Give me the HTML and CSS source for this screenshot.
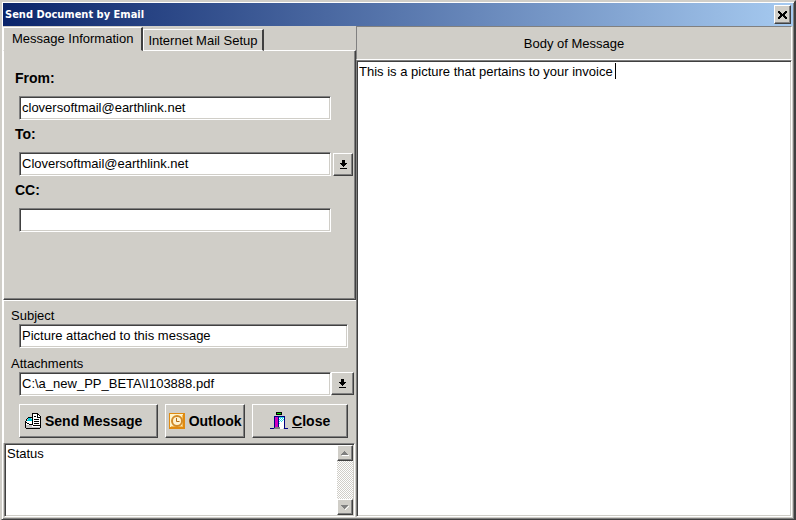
FILE: index.html
```
<!DOCTYPE html>
<html lang="en">
<head>
    <meta charset="utf-8">
    <title>Send Document by Email</title>
    <link rel="stylesheet" href="styles.css">
</head>
<body>
    <div class="window">
        <div class="titlebar">
            <span class="title">Send Document by Email</span>
            <button type="button" class="raised close-box" aria-label="Close window">
                <svg width="9" height="8" viewBox="0 0 9 8" shape-rendering="crispEdges"><path d="M0 0h2v1h-2zM7 0h2v1h-2zM0 1h3v1h-3zM6 1h3v1h-3zM1 2h3v1h-3zM5 2h3v1h-3zM2 3h5v2h-5zM1 5h3v1h-3zM5 5h3v1h-3zM0 6h3v1h-3zM6 6h3v1h-3zM0 7h2v1h-2zM7 7h2v1h-2z"/></svg>
            </button>
        </div>

        <form class="content">
            <div class="left">
                <div class="tabs" role="tablist">
                    <button type="button" class="tab active" role="tab" aria-selected="true">Message Information</button>
                    <button type="button" class="tab" role="tab" aria-selected="false">Internet Mail Setup</button>
                </div>

                <div class="tab-page">
                    <label class="heading" for="from">From:</label>
                    <div class="field">
                        <input type="text" class="sunken" id="from" value="cloversoftmail@earthlink.net">
                    </div>
                    <label class="heading" for="to">To:</label>
                    <div class="field">
                        <input type="text" class="sunken" id="to" value="Cloversoftmail@earthlink.net">
                        <button type="button" class="raised drop" aria-label="Choose recipient">
                            <svg width="7" height="9" viewBox="0 0 7 9" shape-rendering="crispEdges"><path d="M2 0h3v3h2v1h-1v1h-1v1h-1v1h-1v-1h-1v-1h-1v-1h-1v-1h2zM0 8h7v1h-7z"/></svg>
                        </button>
                    </div>
                    <label class="heading" for="cc">CC:</label>
                    <div class="field">
                        <input type="text" class="sunken" id="cc">
                    </div>
                </div>

                <div class="details">
                    <label for="subject">Subject</label>
                    <div class="field">
                        <input type="text" class="sunken" id="subject" value="Picture attached to this message">
                    </div>
                    <label for="attachments">Attachments</label>
                    <div class="field attach">
                        <input type="text" class="sunken" id="attachments" value="C:\a_new_PP_BETA\I103888.pdf">
                        <button type="button" class="raised drop" aria-label="Choose attachment">
                            <svg width="7" height="9" viewBox="0 0 7 9" shape-rendering="crispEdges"><path d="M2 0h3v3h2v1h-1v1h-1v1h-1v1h-1v-1h-1v-1h-1v-1h-1v-1h2zM0 8h7v1h-7z"/></svg>
                        </button>
                    </div>
                    <div class="actions">
                        <button type="submit" class="raised action send">
                            <svg width="16" height="16" viewBox="0 0 16 16" shape-rendering="crispEdges">
                                <path fill="#fff" d="M1 7h6v-6h6l2 3v11h-14z"/>
                                <path fill="#c4c4c4" d="M1 12h6v2h8v1h-14z"/>
                                <path fill="#00c8d8" d="M3 5h3v1h1v2h-5v-1h1z"/>
                                <!-- sheet -->
                                <path d="M7 0h6v1h-6zM7 1h1v11h-1zM13 1h1v1h-1zM14 2h1v1h-1zM15 3h1v10h-1zM12 1h1v3h3v1h-4zM8 12h8v1h-8z"/>
                                <path d="M9 3h2v1h-2zM9 6h5v1h-5zM9 8h5v1h-5zM9 10h5v1h-5z"/>
                                <!-- envelope -->
                                <path d="M3 4h4v1h-4zM2 5h1v1h-1zM1 6h1v2h-1zM0 8h1v7h-1zM1 9h1v1h-1zM2 10h2v1h-2zM4 11h3v1h-3zM1 15h14v1h-14zM15 13h1v2h-1z"/>
                            </svg>
                            <span>Send Message</span>
                        </button>
                        <button type="button" class="raised action outlook">
                            <svg width="16" height="16" viewBox="0 0 16 16">
                                <path fill="#e08a10" d="M0 0h16v16h-16z"/>
                                <path fill="#fff3c8" d="M1 1h13v13h-13z"/>
                                <path fill="#f6bd58" d="M13 2h1v12h-12v-1h11z"/>
                                <circle cx="8" cy="8" r="5" fill="#fff3d0" stroke="#d18a28" stroke-width="2"/>
                                <path fill="none" stroke="#b06a18" d="M7.500 5v3.500h3"/>
                            </svg>
                            <span>Outlook</span>
                        </button>
                        <button type="button" class="raised action close">
                            <svg width="18" height="18" viewBox="0 0 18 18" shape-rendering="crispEdges">
                                <path d="M6 0h6v3h-6z"/>
                                <path fill="#00d800" d="M7 1h4v1h-4z"/>
                                <path fill="#000080" d="M4 4h11v1h-11zM4 5h1v12h-1zM8 5h1v10h-1zM14 5h1v12h-1zM0 16h4v1h-4zM15 16h3v1h-3z"/>
                                <path fill="#d000c0" d="M5 5h3v10h-1v1h-2z"/>
                                <path fill="#fff" d="M9 5h5v11h-1v1h-3v-2h-1z"/>
                                <path fill="#30d8e8" d="M9 5h5v1h-5zM9 7h1v1h-1zM11 7h1v1h-1zM13 7h1v1h-1zM10 6h1v1h-1zM12 6h1v1h-1zM10 8h1v1h-1zM12 8h1v1h-1zM9 9h1v1h-1zM11 9h1v1h-1zM9 11h1v1h-1z"/>
                                <path fill="#808080" d="M5 15h5v2h-6v-1h1z"/>
                            </svg>
                            <span><u>C</u>lose</span>
                        </button>
                    </div>
                </div>

                <div class="sunken status">
                    <textarea aria-label="Status" readonly>Status</textarea>
                    <div class="scrollbar">
                        <button type="button" class="raised" aria-label="Scroll up">
                            <svg width="8" height="5" viewBox="0 0 8 5" shape-rendering="crispEdges"><path fill="#fff" d="M1 4h7v1h-7z"/><path fill="#808080" d="M3 0h1v1h1v1h1v1h1v1h-7v-1h1v-1h1v-1h1z"/></svg>
                        </button>
                        <button type="button" class="raised" aria-label="Scroll down">
                            <svg width="8" height="5" viewBox="0 0 8 5" shape-rendering="crispEdges"><path fill="#fff" d="M7 1h1v1h-1v1h-1v1h-1v1h-1v-1z"/><path fill="#808080" d="M0 0h7v1h-1v1h-1v1h-1v1h-1v-1h-1v-1h-1v-1h-1z"/></svg>
                        </button>
                    </div>
                </div>
            </div>

            <div class="right">
                <label class="body-label" for="body">Body of Message</label>
                <div class="sunken body-box">
                    <textarea id="body">This is a picture that pertains to your invoice</textarea>
                    <span class="caret"></span>
                </div>
            </div>
        </form>
    </div>
</body>
</html>
```
FILE: styles.css
```
* {
    box-sizing: border-box;
}

body {
    margin: 0;
    font: 13px/16px "Liberation Sans", Arial, sans-serif;
    color: #000;
}

input, textarea, button {
    margin: 0;
    padding: 0;
    font: inherit;
    color: inherit;
    border: 0;
    border-radius: 0;
    outline: 0;
}

svg {
    display: block;
    flex: none;
}

.window {
    display: flex;
    flex-direction: column;
    min-height: 100vh;
    padding: 1px;
    background: #d0cec8;
    border: 2px solid;
    border-color: #d0cec8 #404040 #404040 #d0cec8;
    box-shadow: inset 1px 1px #fff, inset -1px -1px #808080;
}

.raised {
    display: flex;
    align-items: center;
    justify-content: center;
    background: #d0cec8;
    border: 1px solid;
    border-color: #fff #404040 #404040 #fff;
    box-shadow: inset -1px -1px #808080;
}

.sunken {
    background: #fff;
    border: 1px solid;
    border-color: #808080 #fff #fff #808080;
    box-shadow: inset 1px 1px #404040, inset -1px -1px #d0cec8;
}

.titlebar {
    display: flex;
    align-items: center;
    justify-content: space-between;
    height: 23px;
    padding: 0 2px;
    background: linear-gradient(to right, #0a246a, #a6caf0);
}

.title {
    font: bold 11px/16px "DejaVu Sans Condensed", sans-serif;
    color: #fff;
}

.close-box {
    width: 17px;
    height: 19px;
}

.content {
    flex: 1;
    display: grid;
    grid-template-columns: 353fr 436fr;
    padding: 0 1px 1px 0;
}

.left, .right {
    display: flex;
    flex-direction: column;
    min-width: 0;
}

.tabs {
    display: flex;
    align-items: flex-end;
    height: 25px;
    margin-bottom: -1px;
    position: relative;
}

.tab {
    height: 22px;
    padding: 1px 4px 0;
    background: #d0cec8;
    border: solid;
    border-width: 1px 2px 1px 1px;
    border-color: #fff #404040 #fff #fff;
}

    .tab.active {
        height: 24px;
        padding: 0 8px;
        border-bottom-color: #d0cec8;
    }

.tab-page {
    height: 250px;
    padding: 19px 24px 0 11px;
    border: 1px solid;
    border-color: #fff #404040 #404040 #fff;
    box-shadow: inset -1px -1px #808080;
}

.heading {
    display: block;
    font-size: 14px;
    font-weight: bold;
}

.field {
    display: flex;
    margin: 10px 0 6px 4px;
}

    .field input {
        flex: 1;
        min-width: 0;
        height: 24px;
        padding: 0 3px 2px 2px;
    }

.drop {
    width: 20px;
    height: 23px;
}

    .tab-page .drop {
        margin: 1px -22px 0 2px;
    }

.details {
    padding: 7px 8px 5px 7px;
    border-top: 1px solid #fff;
    border-left: 1px solid #fff;
}

    .details label {
        display: block;
    }

    .details .field {
        margin: 0 0 8px 8px;
    }

    .details .attach {
        margin-right: -6px;
    }

    .details .attach .drop {
        width: 23px;
    }

.actions {
    display: flex;
    gap: 7px;
    margin-left: 8px;
}

.action {
    height: 34px;
    gap: 4px;
    font-size: 14px;
    font-weight: bold;
    white-space: nowrap;
}

.send {
    flex: 138;
    justify-content: flex-start;
    padding-left: 5px;
}

.outlook {
    flex: 82;
}

.close {
    flex: 98;
}

.status {
    flex: 1;
    display: flex;
    min-height: 74px;
    margin: 0 1px;
    padding: 1px;
}

    .status textarea {
        flex: 1;
        min-width: 0;
        padding: 1px;
        resize: none;
        overflow: hidden;
    }

.scrollbar {
    display: flex;
    flex-direction: column;
    justify-content: space-between;
    width: 16px;
    background: repeating-conic-gradient(#fff 0 25%, #d0cec8 0 50%) 0 0 / 2px 2px;
}

    .scrollbar .raised {
        height: 16px;
    }

.body-label {
    height: 34px;
    line-height: 34px;
    text-align: center;
    border: 1px solid;
    border-color: #808080 #fff #fff #808080;
}

.body-box {
    flex: 1;
    display: flex;
    position: relative;
    padding: 3px 2px 2px;
}

    .body-box textarea {
        flex: 1;
        resize: none;
        overflow: hidden;
    }

.caret {
    position: absolute;
    top: 2px;
    left: 258px;
    width: 1px;
    height: 16px;
    background: #000;
}
```
